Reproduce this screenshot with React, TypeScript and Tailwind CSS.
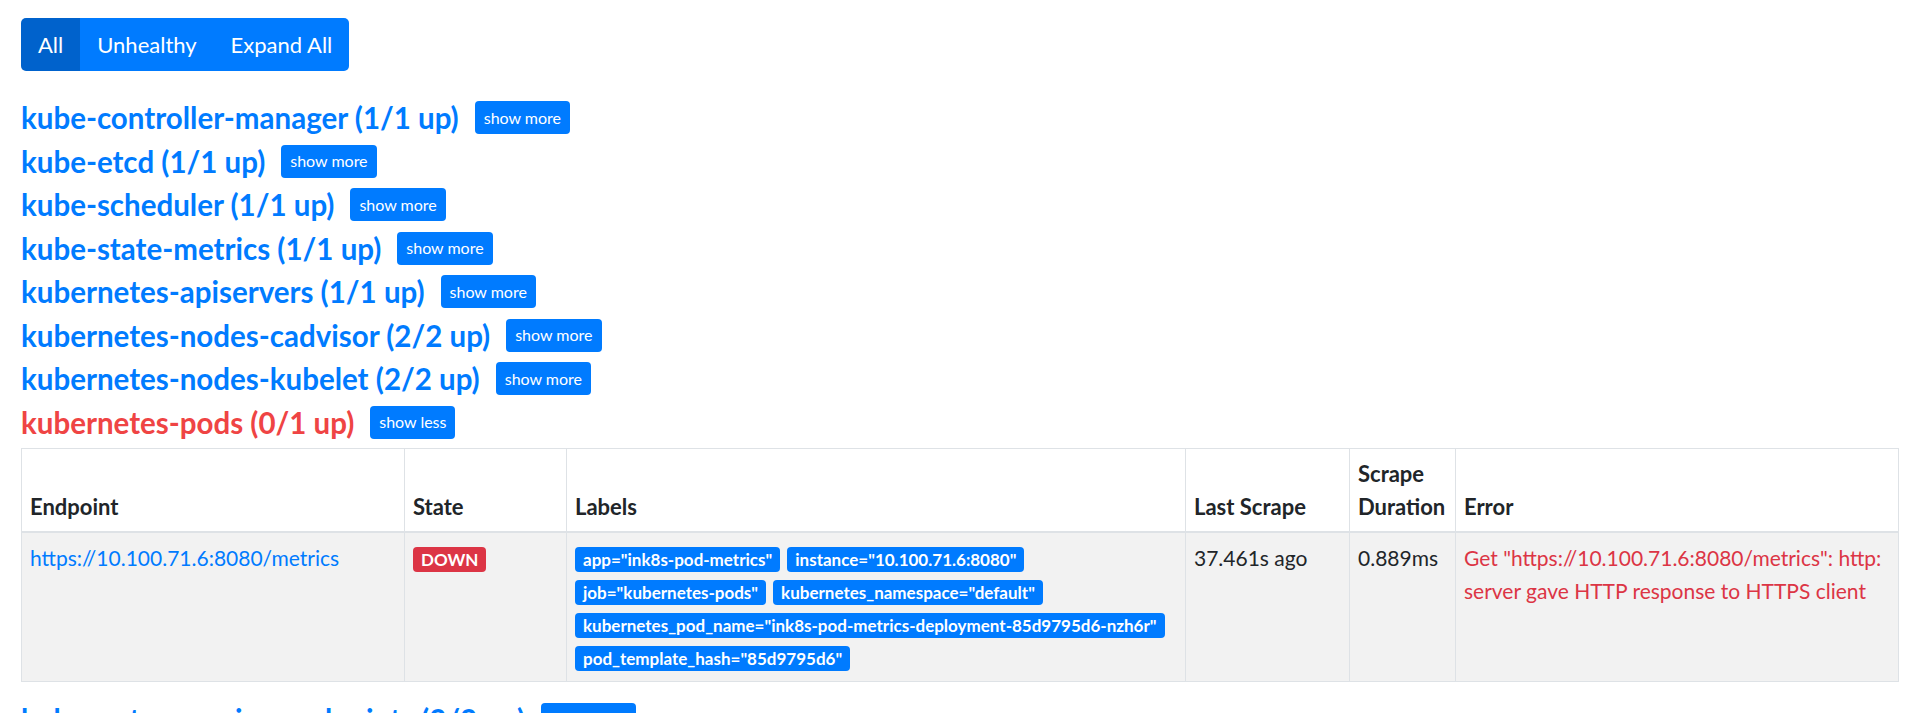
import { useState } from "react";

type Pool = {
    name: string;
    up: number;
    total: number;
};

type Target = {
    endpoint: string;
    health: "up" | "down";
    labels: Record<string, string>;
    lastScrape: string;
    duration: string;
    error: string;
};

const pools: Pool[] = [
    { name: "kube-controller-manager", up: 1, total: 1 },
    { name: "kube-etcd", up: 1, total: 1 },
    { name: "kube-scheduler", up: 1, total: 1 },
    { name: "kube-state-metrics", up: 1, total: 1 },
    { name: "kubernetes-apiservers", up: 1, total: 1 },
    { name: "kubernetes-nodes-cadvisor", up: 2, total: 2 },
    { name: "kubernetes-nodes-kubelet", up: 2, total: 2 },
    { name: "kubernetes-pods", up: 0, total: 1 },
    { name: "kubernetes-service-endpoints", up: 2, total: 2 },
];

const podTargets: Target[] = [
    {
        endpoint: "https://10.100.71.6:8080/metrics",
        health: "down",
        labels: {
            app: "ink8s-pod-metrics",
            instance: "10.100.71.6:8080",
            job: "kubernetes-pods",
            kubernetes_namespace: "default",
            kubernetes_pod_name: "ink8s-pod-metrics-deployment-85d9795d6-nzh6r",
            pod_template_hash: "85d9795d6",
        },
        lastScrape: "37.461s ago",
        duration: "0.889ms",
        error: 'Get "https://10.100.71.6:8080/metrics": http: server gave HTTP response to HTTPS client',
    },
];

const TargetsTable = ({ targets }: { targets: Target[] }) => (
    <table className="w-full table-fixed border-collapse mt-[5px] mb-[20px]">
        <colgroup>
            <col className="w-[383px]" />
            <col className="w-[162px]" />
            <col className="w-[619px]" />
            <col className="w-[164px]" />
            <col className="w-[106px]" />
            <col />
        </colgroup>
        <thead>
            <tr className="text-left">
                {["Endpoint", "State", "Labels", "Last Scrape", "Scrape Duration", "Error"].map((h) => (
                    <th
                        key={h}
                        className="align-bottom p-2 font-bold border border-[#dee2e6] border-b-2"
                    >
                        {h}
                    </th>
                ))}
            </tr>
        </thead>
        <tbody className="text-[21px] leading-[33px]">
            {targets.map((t) => (
                <tr key={t.endpoint} className="bg-[#f2f2f2]">
                    <td className="align-top p-2 border border-[#dee2e6]">
                        <a href="#" className="text-[#007bff] hover:underline">
                            {t.endpoint}
                        </a>
                    </td>
                    <td className="align-top p-2 border border-[#dee2e6]">
                        <span className="inline-block px-[8px] py-[4px] rounded-[4px] bg-[#dc3545] text-white text-[17px] font-bold leading-none">
                            {t.health.toUpperCase()}
                        </span>
                    </td>
                    <td className="align-top p-2 border border-[#dee2e6]">
                        {Object.entries(t.labels).map(([k, v]) => (
                            <span
                                key={k}
                                className="inline-block whitespace-nowrap mr-[7px] px-[8px] py-[4px] rounded-[4px] bg-[#007bff] text-white text-[17px] font-bold leading-none"
                            >
                                {k}="{v}"
                            </span>
                        ))}
                    </td>
                    <td className="align-top p-2 border border-[#dee2e6]">{t.lastScrape}</td>
                    <td className="align-top p-2 border border-[#dee2e6]">{t.duration}</td>
                    <td className="align-top py-2 pl-2 pr-1 border border-[#dee2e6] text-[#dc3545]">{t.error}</td>
                </tr>
            ))}
        </tbody>
    </table>
);

const App = () => {
    const [filter, setFilter] = useState<"all" | "unhealthy">("all");
    const [expanded, setExpanded] = useState<string[]>(["kubernetes-pods"]);

    const toggle = (name: string) =>
        setExpanded((prev) => (prev.includes(name) ? prev.filter((n) => n !== name) : [...prev, name]));

    return (
        <div className="min-h-screen bg-white px-[21px] pt-[18px] font-['Lato',sans-serif] text-[22px] leading-[1.5] text-[#212529]">
            {/* filter buttons */}
            <div className="inline-flex rounded-[5px] overflow-hidden text-white">
                <button
                    className={`h-[53px] px-[17px] ${filter === "all" ? "bg-[#0062cc]" : "bg-[#007bff]"}`}
                    onClick={() => setFilter("all")}
                >
                    All
                </button>
                <button
                    className={`h-[53px] px-[17px] ${filter === "unhealthy" ? "bg-[#0062cc]" : "bg-[#007bff]"}`}
                    onClick={() => setFilter("unhealthy")}
                >
                    Unhealthy
                </button>
                <button className="h-[53px] px-[17px] bg-[#007bff]" onClick={() => setExpanded(pools.map((p) => p.name))}>
                    Expand All
                </button>
            </div>

            {/* scrape pools */}
            <div className="mt-[29px]">
                {pools.map((p) => {
                    const open = expanded.includes(p.name);
                    const healthy = p.up === p.total;
                    return (
                        <div key={p.name}>
                            <div className="flex items-center h-[35.5px] mb-[8px]">
                                <a
                                    href="#"
                                    className={`text-[29.5px] font-bold leading-none ${healthy ? "text-[#007bff]" : "text-[#ef4444]"}`}
                                >
                                    {p.name} ({p.up}/{p.total} up)
                                </a>
                                <button
                                    className="ml-4 h-[33px] px-[9px] rounded-[4px] bg-[#007bff] text-white text-[16px]"
                                    onClick={() => toggle(p.name)}
                                >
                                    {open ? "show less" : "show more"}
                                </button>
                            </div>
                            {open && p.name === "kubernetes-pods" && <TargetsTable targets={podTargets} />}
                        </div>
                    );
                })}
            </div>
        </div>
    );
};

export default App;
